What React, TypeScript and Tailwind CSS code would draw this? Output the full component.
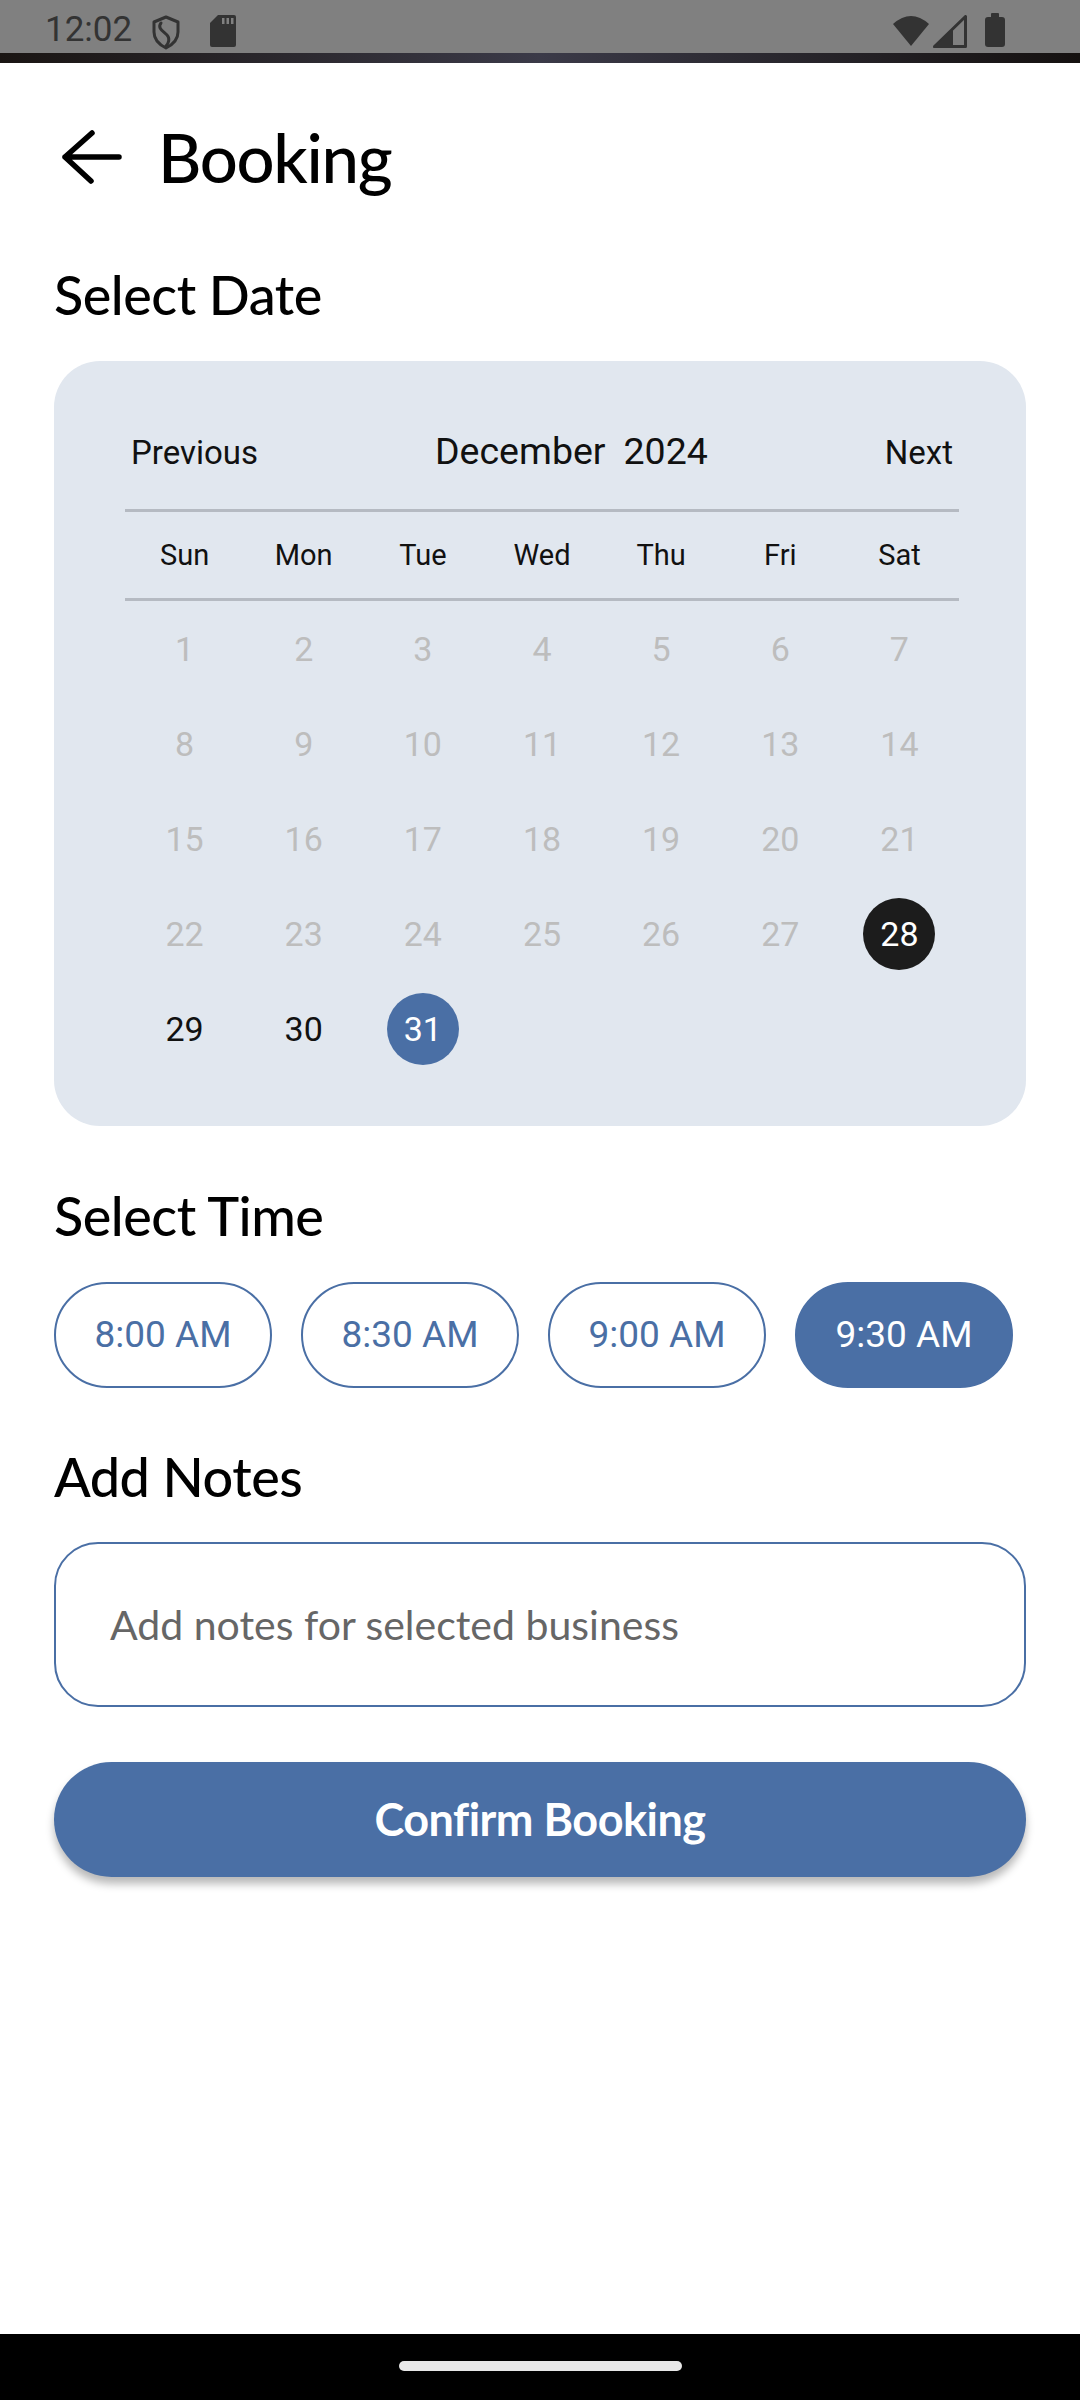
import React from "react";

const BLUE = "#4a6fa5";

function StatusBar() {
  return (
    <div className="relative h-[53px] w-full bg-[#808080]">
      <span
        className="absolute left-[45px] top-[12px] text-[35px] leading-none text-[#333333]"
        style={{ fontFamily: "Roboto, sans-serif" }}
      >
        12:02
      </span>
      <svg className="absolute left-[151px] top-[15px]" width="30" height="35" viewBox="0 0 30 35">
        <path d="M15 2 L27 7 V17 C27 25 21 30 15 33 C9 30 3 25 3 17 V7 Z" fill="none" stroke="#333" strokeWidth="3" strokeLinejoin="round" />
        <path d="M10 8 C6 13 12 16 16 20 C19 23 18 28 15 31" fill="none" stroke="#333" strokeWidth="3" strokeLinecap="round" />
      </svg>
      <svg className="absolute left-[210px] top-[15px]" width="26" height="32" viewBox="0 0 26 32">
        <path d="M8 0 H24 A2 2 0 0 1 26 2 V30 A2 2 0 0 1 24 32 H2 A2 2 0 0 1 0 30 V8 Z" fill="#333" />
        <rect x="12" y="3" width="2.5" height="6" fill="#808080" />
        <rect x="16.5" y="3" width="2.5" height="6" fill="#808080" />
        <rect x="21" y="3" width="2.5" height="6" fill="#808080" />
      </svg>
      <svg className="absolute left-[892px] top-[13px]" width="38" height="34" viewBox="0 0 38 34">
        <path d="M19 33 L1 11 Q19 -5 37 11 Z" fill="#333" />
      </svg>
      <svg className="absolute left-[933px] top-[15px]" width="34" height="33" viewBox="0 0 34 33">
        <path d="M1.5 31.5 L32.5 1.5 V31.5 Z" fill="none" stroke="#333" strokeWidth="3" strokeLinejoin="round" />
        <path d="M0 33 L20 33 L20 13.6 Z" fill="#333" />
      </svg>
      <svg className="absolute left-[985px] top-[13px]" width="20" height="35" viewBox="0 0 20 35">
        <rect x="6" y="0" width="8" height="5" rx="1" fill="#333" />
        <rect x="0" y="4" width="20" height="30" rx="3" fill="#333" />
      </svg>
    </div>
  );
}

const weekdays = ["Sun", "Mon", "Tue", "Wed", "Thu", "Fri", "Sat"];

function DateCell({ d }: { d: number | null }) {
  if (d === null) return <div className="h-[95px]" />;
  let inner: React.ReactNode;
  if (d === 28) {
    inner = (
      <div className="flex h-[72px] w-[72px] items-center justify-center rounded-full bg-[#1c1c1c] text-white">
        {d}
      </div>
    );
  } else if (d === 31) {
    inner = (
      <div className="flex h-[72px] w-[72px] items-center justify-center rounded-full bg-[#4a6fa5] text-white">
        {d}
      </div>
    );
  } else if (d >= 29) {
    inner = <span className="text-[#111111]">{d}</span>;
  } else {
    inner = <span className="text-[#bdbdbd]">{d}</span>;
  }
  return <div className="flex h-[95px] items-center justify-center">{inner}</div>;
}

function Calendar() {
  const cells: (number | null)[] = [];
  for (let i = 1; i <= 31; i++) cells.push(i);
  while (cells.length < 35) cells.push(null);
  return (
    <div
      className="mt-[39px] flex flex-col rounded-[46px] bg-[#e1e7ef] pb-[50px] pl-[71px] pr-[67px] pt-[61px]"
      style={{ fontFamily: "Roboto, sans-serif" }}
    >
      <div className="flex h-[60px] items-center justify-between px-[6px] text-[#111111]">
        <span className="text-[33px] leading-none">Previous</span>
        <span className="text-[37.5px] leading-none">
          December<span className="inline-block w-[18px]" />2024
        </span>
        <span className="text-[33px] leading-none">Next</span>
      </div>
      <div className="mt-[27px] h-[3px] bg-[#b5bac2]" />
      <div className="grid h-[86px] grid-cols-7 items-center text-[29px] leading-none text-[#111111]">
        {weekdays.map((w) => (
          <span key={w} className="text-center">
            {w}
          </span>
        ))}
      </div>
      <div className="h-[3px] bg-[#b5bac2]" />
      <div className="grid grid-cols-7 text-[34px] leading-none">
        {cells.map((d, i) => (
          <DateCell key={i} d={d} />
        ))}
      </div>
    </div>
  );
}

const times = ["8:00 AM", "8:30 AM", "9:00 AM", "9:30 AM"];

export default function App() {
  const lato = { fontFamily: "Lato, 'Noto Sans', sans-serif" };
  return (
    <div className="flex h-[2400px] w-[1080px] flex-col overflow-hidden bg-white">
      <StatusBar />
      <div className="h-[10px] w-full bg-gradient-to-r from-[#1a1513] via-[#3b3a48] to-[#151110]" />
      <div className="flex flex-1 flex-col px-[54px]" style={lato}>
        <div className="mt-[61px] flex h-[66px] items-center">
          <svg className="ml-[6px]" width="62" height="58" viewBox="0 0 62 58">
            <path d="M5 29 H59 M32 5 L5 29 L31 53" fill="none" stroke="#000" strokeWidth="5.5" strokeLinecap="round" strokeLinejoin="round" />
          </svg>
          <span className="ml-[36px] text-[67px] font-medium leading-none tracking-[-1.3px] text-black">
            Booking
          </span>
        </div>

        <div className="mt-[78px] text-[54px] font-medium leading-none tracking-[-0.5px] text-black">Select Date</div>

        <Calendar />

        <div className="mt-[63px] text-[54px] font-medium leading-none tracking-[-0.5px] text-black">Select Time</div>

        <div className="mt-[39px] flex gap-[29px]" style={{ fontFamily: "Roboto, sans-serif" }}>
          {times.map((t) => {
            const active = t === "9:30 AM";
            return (
              <div
                key={t}
                className={
                  active
                    ? "flex h-[106px] w-[218px] items-center justify-center rounded-full border-2 border-[#4a6fa5] bg-[#4a6fa5] text-[37px] text-white"
                    : "flex h-[106px] w-[218px] items-center justify-center rounded-full border-2 border-[#4a6fa5] bg-white text-[37px] text-[#4a6fa5]"
                }
              >
                {t}
              </div>
            );
          })}
        </div>

        <div className="mt-[62px] text-[54px] font-medium leading-none tracking-[-0.5px] text-black">Add Notes</div>

        <div className="mt-[38px] flex h-[165px] items-center rounded-[44px] border-2 border-[#4a6fa5] pl-[54px]">
          <span className="text-[41px] leading-none text-[#666666]">Add notes for selected business</span>
        </div>

        <div
          className="mt-[55px] flex h-[115px] items-center justify-center rounded-full shadow-[0_7px_9px_rgba(0,0,0,0.28)]"
          style={{ backgroundColor: BLUE }}
        >
          <span className="text-[45px] font-bold leading-none tracking-[-0.5px] text-white">Confirm Booking</span>
        </div>
      </div>
      <div className="flex h-[66px] w-full justify-center bg-black">
        <div className="mt-[27px] h-[10px] w-[283px] rounded-full bg-[#e8e8e8]" />
      </div>
    </div>
  );
}
